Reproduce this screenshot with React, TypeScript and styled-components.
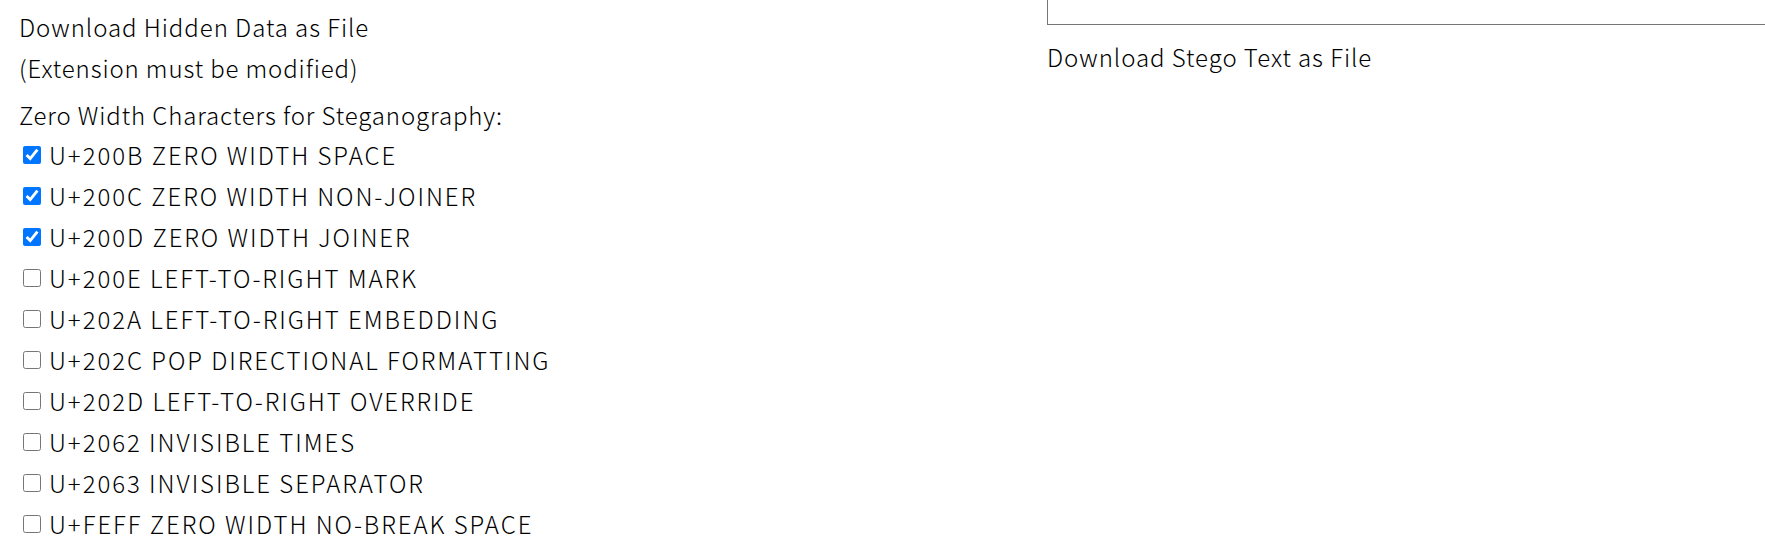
import React from "react";
import styled, { createGlobalStyle } from "styled-components";

const GlobalStyle = createGlobalStyle`
  html, body {
    margin: 0;
    padding: 0;
    background: #ffffff;
    overflow: hidden;
  }
  body {
    font-family: "Noto Sans CJK JP", "Noto Sans", sans-serif;
    color: #000000;
  }
`;

const Page = styled.div`
  display: grid;
  grid-template-columns: 1028px 1fr;
  padding-left: 19px;
  width: 1765px;
  box-sizing: border-box;
  overflow: hidden;
  font-size: 24px;
  font-weight: 300;
`;

const Column = styled.div<{ $top: number }>`
  display: flex;
  flex-direction: column;
  padding-top: ${(p) => p.$top}px;
  min-width: 0;
`;

const TextLine = styled.div<{ $gap?: number; $lh?: number }>`
  line-height: ${(p) => p.$lh ?? 41}px;
  margin-top: ${(p) => p.$gap ?? 0}px;
  white-space: nowrap;
  letter-spacing: 0.88px;
`;

const DownloadLink = styled.a`
  color: inherit;
  text-decoration: none;
  cursor: pointer;
  letter-spacing: 0.95px;
`;

const CharList = styled.div`
  display: flex;
  flex-direction: column;
`;

const CharRow = styled.label`
  display: flex;
  align-items: center;
  height: 41px;
  white-space: nowrap;
  letter-spacing: 1.95px;
  cursor: pointer;
`;

const Check = styled.input`
  width: 18px;
  height: 18px;
  margin: 0 8px 0 4px;
  accent-color: #0075ff;
`;

const TextAreaStub = styled.textarea`
  display: block;
  width: calc(100% + 4px);
  height: 25px;
  box-sizing: border-box;
  border: 1px solid #767676;
  border-top: 0;
  border-radius: 0;
  padding: 0;
  margin: 0;
  resize: none;
  outline: none;
  background: #fff;
`;

const chars: { code: string; name: string; checked: boolean }[] = [
  { code: "U+200B", name: "ZERO WIDTH SPACE", checked: true },
  { code: "U+200C", name: "ZERO WIDTH NON-JOINER", checked: true },
  { code: "U+200D", name: "ZERO WIDTH JOINER", checked: true },
  { code: "U+200E", name: "LEFT-TO-RIGHT MARK", checked: false },
  { code: "U+202A", name: "LEFT-TO-RIGHT EMBEDDING", checked: false },
  { code: "U+202C", name: "POP DIRECTIONAL FORMATTING", checked: false },
  { code: "U+202D", name: "LEFT-TO-RIGHT OVERRIDE", checked: false },
  { code: "U+2062", name: "INVISIBLE TIMES", checked: false },
  { code: "U+2063", name: "INVISIBLE SEPARATOR", checked: false },
  { code: "U+FEFF", name: "ZERO WIDTH NO-BREAK SPACE", checked: false },
];

export default function App() {
  return (
    <>
      <GlobalStyle />
      <Page>
        <Column $top={6}>
          <TextLine>
            <DownloadLink>Download Hidden Data as File</DownloadLink>
          </TextLine>
          <TextLine>(Extension must be modified)</TextLine>
          <TextLine $gap={8} $lh={38}>
            Zero Width Characters for Steganography:
          </TextLine>
          <CharList>
            {chars.map((c) => (
              <CharRow key={c.code}>
                <Check type="checkbox" defaultChecked={c.checked} />
                {c.code} {c.name}
              </CharRow>
            ))}
          </CharList>
        </Column>
        <Column $top={0}>
          <TextAreaStub readOnly />
          <TextLine $gap={11}>
            <DownloadLink>Download Stego Text as File</DownloadLink>
          </TextLine>
        </Column>
      </Page>
    </>
  );
}
